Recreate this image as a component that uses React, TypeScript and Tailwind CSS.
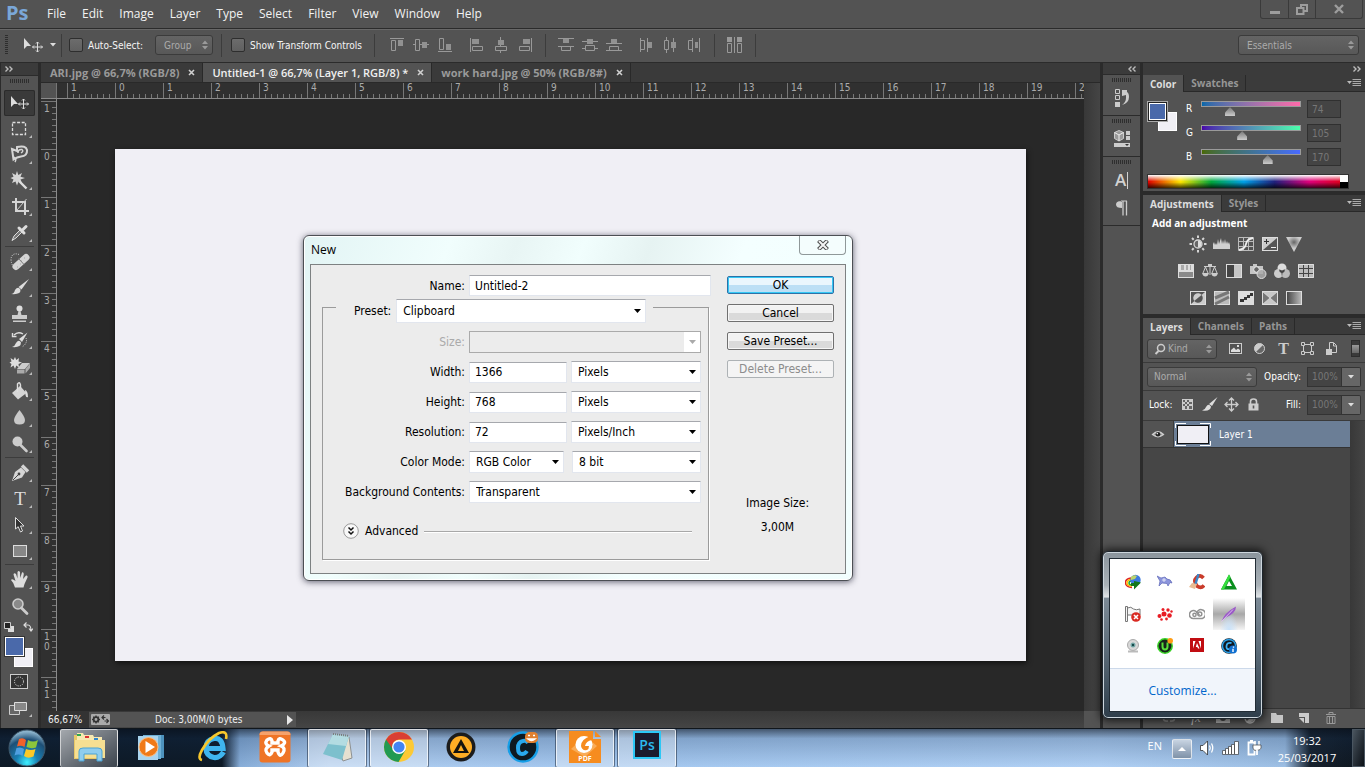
import { useId, useState } from "react";
import type { ReactNode } from "react";
import clsx from "clsx";

const menus = ["File", "Edit", "Image", "Layer", "Type", "Select", "Filter", "View", "Window", "Help"];

/* ---------- small shared pieces ---------- */

function Grip({ className }: { className?: string }) {
  return (
    <div
      className={clsx(
        "bg-[repeating-linear-gradient(90deg,#2e2e2e_0_1px,transparent_1px_2px)]",
        className
      )}
    />
  );
}

function UpDown() {
  return (
    <svg viewBox="0 0 6 10" className="h-[10px] w-[6px]" aria-hidden="true">
      <path d="M0 4 3 0.5 6 4Z M0 6 3 9.5 6 6Z" fill="#9a9a9a" />
    </svg>
  );
}

function DarkSelect({
  label,
  value,
  className,
  padding = "pl-2",
  icon,
}: {
  label: string;
  value: string;
  className?: string;
  padding?: string;
  icon?: ReactNode;
}) {
  return (
    <div
      className={clsx(
        "relative h-5 rounded-[3px] border border-[#3b3b3b] bg-linear-to-b from-[#646464] to-[#585858]",
        className
      )}
    >
      {icon && <div className="absolute left-1.5 top-[3px]">{icon}</div>}
      <select
        aria-label={label}
        defaultValue={value}
        className={clsx("block h-full w-full appearance-none bg-transparent text-[10px] text-[#ababab] outline-none", padding)}
      >
        <option>{value}</option>
      </select>
      <div className="pointer-events-none absolute inset-y-0 right-1 flex items-center">
        <UpDown />
      </div>
    </div>
  );
}

function PanelTabs({ tabs }: { tabs: string[] }) {
  return (
    <div className="flex h-[17px] shrink-0 items-stretch bg-[#3b3b3b] font-['Open_Sans',sans-serif] text-[10px] font-bold">
      {tabs.map((tab, i) => (
        <button
          key={tab}
          className={clsx(
            "border-r border-[#292929] px-[7px] leading-[16px]",
            i === 0 ? "bg-[#535353] text-[#dedede]" : "border-b text-[#969696]"
          )}
        >
          {tab}
        </button>
      ))}
      <div className="flex flex-1 items-center justify-end border-b border-[#292929] pr-1">
        <button aria-label="Panel menu">
          <svg viewBox="0 0 14 10" className="h-[10px] w-[14px]" aria-hidden="true">
            <path d="M0 3H5L2.5 6Z" fill="#bbb" />
            <path d="M5.5 1.5H14M5.5 3.5H14M5.5 5.5H14M5.5 7.5H14" stroke="#aaa" />
          </svg>
        </button>
      </div>
    </div>
  );
}

function Chevrons({ left }: { left?: boolean }) {
  return (
    <svg viewBox="0 0 8 6" className={clsx("h-[6px] w-[8px]", left && "rotate-180")} aria-hidden="true">
      <path d="M0.5 0.5 3 3 0.5 5.5M4.5 0.5 7 3 4.5 5.5" fill="none" stroke="#bcbcbc" strokeWidth="1.4" />
    </svg>
  );
}

/* ---------- menu + options bar ---------- */

function MenuBar() {
  return (
    <header className="flex h-[29px] shrink-0 border-b border-[#2b2b2b] bg-[#535353]">
      <div className="w-[47px] pl-[6px] font-['Open_Sans',sans-serif] text-[20px] font-bold leading-[25px] text-[#7aa7d8]">Ps</div>
      <nav className="flex items-center gap-4 font-['Open_Sans',sans-serif] text-[12px] text-[#f2f2f2]">
        {menus.map((m) => (
          <button key={m}>{m}</button>
        ))}
      </nav>
      <div className="ml-auto mr-[2px] flex h-[19px] rounded-b-[3px] border border-t-0 border-[#3a3a3a]">
        <button aria-label="Minimize" className="flex w-[28px] items-center justify-center border-r border-[#3a3a3a]">
          <svg viewBox="0 0 12 12" className="size-3" aria-hidden="true">
            <path d="M1 8H11V11H1Z" fill="#9d9d9d" />
          </svg>
        </button>
        <button aria-label="Restore" className="flex w-[27px] items-center justify-center border-r border-[#3a3a3a]">
          <svg viewBox="0 0 12 12" className="size-3" fill="none" stroke="#9d9d9d" strokeWidth="2" aria-hidden="true">
            <path d="M5 4V2H11V8H8M1 5H7.5V11H1Z" />
          </svg>
        </button>
        <button aria-label="Close" className="flex w-[46px] items-center justify-center">
          <svg viewBox="0 0 12 12" className="size-3" stroke="#9d9d9d" strokeWidth="2.4" aria-hidden="true">
            <path d="M2 2 10 10M10 2 2 10" />
          </svg>
        </button>
      </div>
    </header>
  );
}

// solid blocks, outlined blocks and guide lines of each align / distribute button
const alignIcons: { name: string; solid: string; outline: string; line: string; space: string }[] = [
  { name: "Align top edges", solid: "M9 3H14V9H9Z", outline: "M2.5 3.5H6.5V13.5H2.5Z", line: "M1 1.5H15", space: "" },
  { name: "Align vertical centers", solid: "M9 5H14V11H9Z", outline: "M2.5 2.5H6.5V13.5H2.5Z", line: "M0 7.5H2M7 7.5H16", space: "ml-2" },
  { name: "Align bottom edges", solid: "M9 7H14V13H9Z", outline: "M2.5 1.5H6.5V12.5H2.5Z", line: "M1 14.5H15", space: "ml-2" },
  { name: "Align left edges", solid: "M3 2H10V7H3Z", outline: "M3.5 9.5H13.5V13.5H3.5Z", line: "M1.5 1V15", space: "ml-4" },
  { name: "Align horizontal centers", solid: "M5 3H11V8H5Z", outline: "M2.5 9.5H13.5V13.5H2.5Z", line: "M7.5 0V3M7.5 8V10M7.5 14V16", space: "ml-2" },
  { name: "Align right edges", solid: "M6 2H13V7H6Z", outline: "M2.5 9.5H12.5V13.5H2.5Z", line: "M14.5 1V15", space: "ml-2" },
];

const distributeIcons = [
  { name: "Distribute top edges", solid: "M5 2H11V6H5Z", outline: "M3.5 9.5H12.5V13.5H3.5Z", line: "M0 1.5H16M0 9.5H16", space: "" },
  { name: "Distribute vertical centers", solid: "M5 2H11V7H5Z", outline: "M3.5 8.5H12.5V13.5H3.5Z", line: "M0 4.5H16M0 11.5H3M13 11.5H16", space: "ml-2" },
  { name: "Distribute bottom edges", solid: "M5 2H11V6H5Z", outline: "M3.5 9.5H12.5V13.5H3.5Z", line: "M0 6.5H16M0 13.5H16", space: "ml-2" },
  { name: "Distribute left edges", solid: "M10 5H14V11H10Z", outline: "M2.5 3.5H6.5V12.5H2.5Z", line: "M2.5 1V15M9.5 1V15", space: "ml-4" },
  { name: "Distribute horizontal centers", solid: "M9 5H14V11H9Z", outline: "M2.5 3.5H6.5V12.5H2.5Z", line: "M4.5 0V3M4.5 13V16M11.5 1V15", space: "ml-2" },
  { name: "Distribute right edges", solid: "M9 5H12V11H9Z", outline: "M2.5 3.5H6.5V12.5H2.5Z", line: "M6.5 1V15M13.5 1V15", space: "ml-2" },
];

function AlignButton({ icon }: { icon: (typeof alignIcons)[number] }) {
  return (
    <button aria-label={icon.name} className={icon.space}>
      <svg viewBox="0 0 16 16" className="size-4" aria-hidden="true">
        <path d={icon.line} stroke="#999" />
        <path d={icon.outline} fill="none" stroke="#999" />
        <path d={icon.solid} fill="#919191" />
      </svg>
    </button>
  );
}

function Divider({ className }: { className?: string }) {
  return <div className={clsx("h-[23px] w-px bg-[#3c3c3c]", className)} />;
}

function DarkCheck({ label, className }: { label: string; className?: string }) {
  return (
    <label className={clsx("flex items-center gap-[5px] text-[10px] text-[#f5f5f5]", className)}>
      <input
        type="checkbox"
        className="size-[14px] appearance-none rounded-[2px] border border-[#2e2e2e] bg-linear-to-b from-[#6c6c6c] to-[#606060]"
      />
      {label}
    </label>
  );
}

function OptionsBar() {
  return (
    <div className="flex h-[34px] shrink-0 items-center border-b border-t border-b-[#2b2b2b] border-t-[#686868] bg-[#535353] pb-0.5 pl-[5px]">
      <div className="h-5 w-[3px] bg-[repeating-linear-gradient(#2e2e2e_0_1px,transparent_1px_2px)]" />
      <button aria-label="Move tool" className="ml-4 flex items-center gap-2">
        <svg viewBox="0 0 18 16" className="h-4 w-[18px] overflow-visible" aria-hidden="true">
          <path d="M0 1V12L3 9H7Z" fill="#ddd" />
          <path d="M13.5 5V15M8.5 10H18.5" stroke="#ddd" />
          <path d="M12 6.5 13.5 5 15 6.5M12 13.5 13.5 15 15 13.5M10 8.5 8.5 10 10 11.5M17 8.5 18.5 10 17 11.5" fill="none" stroke="#ddd" />
        </svg>
        <svg viewBox="0 0 6 4" className="h-1 w-1.5" aria-hidden="true">
          <path d="M0 0H6L3 3.5Z" fill="#ddd" />
        </svg>
      </button>
      <Divider className="ml-[5px]" />
      <DarkCheck label="Auto-Select:" className="ml-[7px]" />
      <DarkSelect label="Auto-select target" value="Group" className="ml-3 w-[58px]" />
      <Divider className="ml-2" />
      <DarkCheck label="Show Transform Controls" className="ml-[9px]" />
      <Divider className="ml-3 mr-3.5" />
      {alignIcons.map((i) => (
        <AlignButton key={i.name} icon={i} />
      ))}
      <Divider className="mx-3" />
      {distributeIcons.map((i) => (
        <AlignButton key={i.name} icon={i} />
      ))}
      <Divider className="mx-3" />
      <button aria-label="Auto-align layers">
        <svg viewBox="0 0 16 16" className="size-4" aria-hidden="true">
          <path d="M0 0H5V5H0ZM10 0H15V5H10Z" fill="#999" />
          <path d="M0.5 6.5H4.5V15.5H0.5ZM10.5 6.5H14.5V15.5H10.5ZM7.5 0V16" fill="none" stroke="#999" />
        </svg>
      </button>
      <Divider className="ml-3" />
      <DarkSelect label="Workspace" value="Essentials" className="ml-auto mr-1.5 w-[121px]" />
    </div>
  );
}

/* ---------- toolbox ---------- */

type Tool = { name: string; art: ReactNode; flyout?: boolean };

const toolGroups: Tool[][] = [
  [
    {
      name: "Move",
      flyout: false,
      art: (
        <>
          <path d="M6 6V17L9 14H13Z" fill="#ddd" />
          <path d="M18.5 9V19M13.5 14H23.5M17 10.5 18.5 9 20 10.5M17 17.5 18.5 19 20 17.5M15 12.5 13.5 14 15 15.5M22 12.5 23.5 14 22 15.5" fill="none" stroke="#ddd" />
        </>
      ),
    },
    { name: "Marquee", art: <rect x="7.5" y="6.5" width="13" height="12" fill="none" stroke="#ddd" strokeDasharray="3 1.6" strokeWidth="1.3" /> },
    {
      name: "Lasso",
      art: (
        <>
          <path d="M7 7 12 9V5Q21 3 22 8Q22.5 14 16 14.500Q12 15 8.500 17.500L7 7Z" fill="none" stroke="#d5d5d5" strokeWidth="2" />
          <path d="M13 11Q13 7 17 7.500Q19 9 16 11M9 15Q12 17 10 20" fill="none" stroke="#d5d5d5" strokeWidth="1.5" />
        </>
      ),
    },
    {
      name: "Magic wand",
      art: (
        <>
          <path d="M12 3 13.3 7 17 5 15.500 8.700 20 10 15.500 11.500 17 15 13.500 13.500 12 17.500 10.500 13.500 7 15 8.500 11.500 5.500 10 8.500 8.700 7 5 10.700 7Z" fill="#d5d5d5" />
          <path d="M14 13 21.5 20.5" stroke="#ddd" strokeWidth="2.4" />
        </>
      ),
    },
    {
      name: "Crop",
      art: (
        <>
          <path d="M11 4V17H24M7 8H20V21" fill="none" stroke="#d5d5d5" strokeWidth="2" />
          <path d="M12 16 21.5 5" stroke="#ccc" />
        </>
      ),
    },
    {
      name: "Eyedropper",
      art: (
        <>
          <path d="M7 20.5 9 16 15 10 17 12 11 18Z" fill="#777" stroke="#ddd" />
          <path d="M14 8 19 13M17 10.5 21 6.5" stroke="#ddd" strokeWidth="3" strokeLinecap="round" />
        </>
      ),
    },
  ],
  [
    {
      name: "Healing brush",
      art: (
        <>
          <path d="M11 17.5 21 8.500" stroke="#d5d5d5" strokeWidth="7" strokeLinecap="round" />
          <path d="M13.5 9.5 19 15.5M15 15H15.5M16.500 12H17M12 18H12.5M19.500 9H20" stroke="#777" />
          <path d="M14 5.5Q7 3 6 10Q6 14 8 17" fill="none" stroke="#ddd" strokeDasharray="1 1.3" />
        </>
      ),
    },
    {
      name: "Brush",
      art: (
        <>
          <path d="M13.500 12 24 4 16.5 14.5Z" fill="#ddd" />
          <path d="M6 19Q9 19 10 15Q13 11 15.5 14.5Q16 20 6 19Z" fill="#ddd" />
        </>
      ),
    },
    {
      name: "Clone stamp",
      art: (
        <>
          <circle cx="14.5" cy="7.5" r="3" fill="#ddd" />
          <path d="M13.5 10H15.5L16.5 14H22V18H7V14H12.5ZM8 19.5H21V21H8Z" fill="#ccc" />
        </>
      ),
    },
    {
      name: "History brush",
      art: (
        <>
          <path d="M14 12 22.5 5.5 17 15Z" fill="#ddd" />
          <path d="M7 20Q10 19 11 16Q14 12 16 15.5Q16 21 7 20Z" fill="#ddd" />
          <path d="M9 8Q13 4 18 7M7.5 6V9.5H11.5" fill="none" stroke="#ddd" strokeWidth="1.4" />
          <path d="M21 11Q23 16 17 20" fill="none" stroke="#ddd" strokeDasharray="1 1.2" />
        </>
      ),
    },
    {
      name: "Background eraser",
      art: (
        <>
          <path d="M10 4 11.3 7 14 5 13.5 8.5 17 9.5 13.5 11 14 14.5 11.3 12.5 10 16 8.5 12.5 5.5 14.5 6.5 11 4.5 9.5 6.5 8.5 5.5 5 8.5 7Z" fill="#ddd" />
          <path d="M12 16 17 10H25L20 16Z" fill="#ccc" />
          <path d="M12 16.500H19.500V20.500H12ZM20.5 16 25 10.500V15L20.5 20.500Z" fill="#aaa" />
        </>
      ),
    },
    {
      name: "Paint bucket",
      art: (
        <>
          <path d="M7 14 15 7 21.5 14 13 20.5Z" fill="#d5d5d5" />
          <path d="M12.5 13V5Q14.5 2 15.5 6V9" fill="none" stroke="#ddd" strokeWidth="1.4" />
          <path d="M20 11Q23 12 23 18Q21 19 20.5 16Z" fill="#ddd" />
        </>
      ),
    },
    { name: "Blur", art: <path d="M14.5 5Q20 12 20 15Q20 19.5 14.5 19.5T9 15Q9 12 14.5 5Z" fill="#c8c8c8" /> },
    {
      name: "Dodge",
      art: (
        <>
          <circle cx="12.5" cy="10.5" r="5" fill="#ccc" />
          <path d="M15.5 14 21.5 20" stroke="#ccc" strokeWidth="2.6" strokeLinecap="round" />
        </>
      ),
    },
  ],
  [
    {
      name: "Pen",
      art: (
        <>
          <path d="M7 21 10 12 16 7.500 20.500 12 17 17.500Z" fill="#d5d5d5" />
          <path d="M17 5.5 23 11.5" stroke="#d5d5d5" strokeWidth="3.4" />
          <path d="M8 20 13.5 14.5" stroke="#444" />
          <circle cx="14" cy="14" r="1.4" fill="#444" />
        </>
      ),
    },
    {
      name: "Type",
      art: (
        <text x="15" y="19" textAnchor="middle" fill="#ddd" fontSize="19" fontFamily="'Liberation Serif', serif">
          T
        </text>
      ),
    },
    { name: "Path selection", art: <path d="M10.5 5.5V17L13.2 14.7 15.5 20 17.5 19 15.5 14H19Z" fill="#333" stroke="#ddd" /> },
    { name: "Rectangle", art: <rect x="8.5" y="7.5" width="13" height="11" fill="#878787" stroke="#ddd" /> },
  ],
  [
    {
      name: "Hand",
      art: (
        <path
          d="M10 20.5Q9 16 6 13Q7 11 10.5 14L8.500 7.5Q9 5.5 11 7L12.500 11.5 12.5 5Q13.5 3 15 5L15.2 11 17 5.500Q18.5 4.500 18.8 7L18 12 21 8.500Q23 8 22.5 10.500L19.5 17 18.5 20.5Z"
          fill="#ddd"
        />
      ),
    },
    {
      name: "Zoom",
      flyout: false,
      art: (
        <>
          <circle cx="13" cy="11" r="5" fill="#8a8a8a" stroke="#ccc" strokeWidth="1.6" />
          <path d="M16.5 15 22 20.5" stroke="#ccc" strokeWidth="2.8" strokeLinecap="round" />
        </>
      ),
    },
  ],
];

function Toolbox() {
  const [active, setActive] = useState("Move");
  return (
    <aside className="ml-px flex w-[37px] shrink-0 flex-col bg-[#535353]">
      <div className="flex h-[12px] shrink-0 items-center bg-[#3b3b3b] pl-1">
        <Chevrons />
      </div>
      <div className="flex h-[15px] shrink-0 items-start justify-center border-t border-[#2b2b2b] pt-[3px]">
        <Grip className="h-1 w-5" />
      </div>
      {toolGroups.map((group, g) => (
        <div key={g} className={clsx("flex flex-col", g > 0 && "mx-1 border-t border-[#3c3c3c] pt-0.5")}>
          {group.map((tool) => (
            <button
              key={tool.name}
              aria-label={tool.name}
              aria-pressed={tool.name === active}
              onClick={() => setActive(tool.name)}
              className={clsx(
                "flex h-[26px] justify-center rounded-[2px]",
                g === 0 && "mx-[3px]",
                tool.name === active && "bg-[#3a3a3a] shadow-[inset_0_0_0_1px_#2b2b2b]"
              )}
            >
              <svg viewBox="0 0 30 26" className="h-[26px] w-[30px] shrink-0" aria-hidden="true">
                {tool.art}
                {tool.flyout !== false && <path d="M27 19V22H24Z" fill="#bbb" />}
              </svg>
            </button>
          ))}
        </div>
      ))}
      <div className="flex h-[16px] items-center justify-between pl-[3px] pr-[5px]">
        <button aria-label="Default colors">
          <svg viewBox="0 0 10 10" className="size-[10px]" aria-hidden="true">
            <path d="M4 4H10V10H4Z" fill="#ddd" />
            <path d="M0.5 0.5H6.5V6.5H0.5Z" fill="#222" stroke="#ccc" />
          </svg>
        </button>
        <button aria-label="Swap colors">
          <svg viewBox="0 0 10 10" className="size-[10px]" fill="none" stroke="#ddd" strokeWidth="1.2" aria-hidden="true">
            <path d="M3.5 0.5 1 3 3.5 5.5M1 3H5Q8 3 8 9M6 6.5 8 9 10 6.5" />
          </svg>
        </button>
      </div>
      <div className="relative ml-1 mr-[5px] mt-0.5 h-[30px]">
        <button aria-label="Background color" className="absolute right-0 bottom-0 size-[19px] border border-white bg-[#f0eff5]" />
        <button aria-label="Foreground color" className="absolute left-0 top-0 size-[19px] border border-white bg-[#4a69aa] outline outline-1 outline-[#333]" />
      </div>
      <button aria-label="Quick mask" className="mr-0.5 mt-[7px] flex justify-center">
        <svg viewBox="0 0 18 15" className="h-[15px] w-[18px]" aria-hidden="true">
          <rect x="0.5" y="0.5" width="17" height="14" fill="#333" stroke="#ccc" />
          <circle cx="9" cy="7.5" r="4.5" fill="none" stroke="#ddd" strokeDasharray="1.2 1.2" />
        </svg>
      </button>
      <button aria-label="Screen mode" className="mt-3 flex justify-center">
        <svg viewBox="0 0 26 17" className="h-[17px] w-[26px]" aria-hidden="true">
          <path d="M2.5 4.5H12.5V13.5H2.5Z" fill="#666" stroke="#ccc" />
          <path d="M7.5 1.5H19.5V9.5H7.5Z" fill="#888" stroke="#ddd" />
          <path d="M25 13V16H22Z" fill="#bbb" />
        </svg>
      </button>
    </aside>
  );
}

/* ---------- document area ---------- */

const docTabs = ["ARI.jpg @ 66,7% (RGB/8)", "Untitled-1 @ 66,7% (Layer 1, RGB/8) *", "work hard.jpg @ 50% (RGB/8#)"];
const hMarks = ["1", ...Array.from({ length: 21 }, (_, i) => String(i))];
const vMarks = ["1", ...Array.from({ length: 12 }, (_, i) => String(i))];

function HorizontalRuler() {
  return (
    <div className="flex h-[16px] shrink-0 border-b border-[#8a8a8a] bg-[#303030]">
      <div className="w-[16px] shrink-0 border-r border-[#777] bg-[#535353]" />
      <div className="flex flex-1 overflow-hidden pl-[10px] text-[10px] leading-[10px] text-[#ababab]">
        {hMarks.map((m, i) => (
          <div key={i} className="flex w-12 shrink-0 flex-col justify-between border-l border-[#777]">
            <span className="pl-[3px]">{m}</span>
            <div className="h-1 bg-[repeating-linear-gradient(90deg,transparent_0_5px,#777_5px_6px)]" />
          </div>
        ))}
      </div>
    </div>
  );
}

function VerticalRuler() {
  return (
    <div className="flex w-[16px] shrink-0 flex-col overflow-hidden border-r border-[#8a8a8a] bg-[#303030] pt-0.5 text-[10px] leading-[10px] text-[#ababab]">
      {vMarks.map((m, i) => (
        <div key={i} className="flex h-12 shrink-0 justify-between border-t border-[#777]">
          <span className="flex flex-col pl-[3px] pt-0.5">
            {m.split("").map((c, n) => (
              <span key={n}>{c}</span>
            ))}
          </span>
          <div className="w-1 bg-[repeating-linear-gradient(transparent_0_5px,#777_5px_6px)]" />
        </div>
      ))}
    </div>
  );
}

function DocumentArea() {
  return (
    <main className="ml-[3px] flex min-w-0 flex-1 flex-col bg-[#3f3f3f]">
      <div className="flex h-5 shrink-0 border-b border-[#292929] bg-[#3a3a3a] font-['Open_Sans',sans-serif] text-[11px]">
        {docTabs.map((t, i) => (
          <div
            key={t}
            className={clsx(
              "flex items-center border-r border-[#292929] pl-[9px] pr-[7px]",
              i === 1 ? "bg-[#535353] font-semibold text-[#f0f0f0]" : "font-bold text-[#999]"
            )}
          >
            <button className="whitespace-nowrap leading-[18px]">{t}</button>
            <button aria-label={"Close " + t} className="ml-[9px]">
              <svg viewBox="0 0 7 7" className="size-[7px]" stroke="#d0d0d0" strokeWidth="1.6" aria-hidden="true">
                <path d="M1 1 6 6M6 1 1 6" />
              </svg>
            </button>
          </div>
        ))}
      </div>
      <div className="flex min-h-0 flex-1">
        <div className="flex min-w-0 flex-1 flex-col">
          <HorizontalRuler />
          <div className="flex min-h-0 flex-1">
            <VerticalRuler />
            <div className="flex-1 overflow-hidden bg-[#282828] pl-[58px] pt-[50px]">
              <div className="h-[512px] w-[911px] bg-[#f0eff5] shadow-[1px_2px_5px_#111]" />
            </div>
          </div>
        </div>
        <div className="w-4 shrink-0 bg-linear-to-r from-[#383838] to-[#454545]" />
      </div>
      <div className="flex h-[17px] shrink-0 items-center bg-linear-to-b from-[#383838] to-[#454545] text-[10px] text-[#f0f0f0]">
        <span className="flex h-full w-[48px] items-center bg-[#333] pl-[7px]">66,67%</span>
        <div className="flex h-[15px] w-[207px] items-center bg-[#535353] pl-[2px] pr-[3px]">
          <svg viewBox="0 0 19 11" className="h-[11px] w-[19px]" aria-hidden="true">
            <rect width="19" height="11" rx="1" fill="#aaa" />
            <circle cx="5" cy="5.5" r="2.3" fill="none" stroke="#333" strokeWidth="1.7" />
            <path d="M5 1.5V3M5 8V9.500M1 5.500H2.500M7.500 5.500H9M2.2 2.700 3.3 3.800M6.700 7.200 7.800 8.300M7.8 2.700 6.700 3.800M3.300 7.200 2.2 8.300" stroke="#333" strokeWidth="1.3" />
            <path d="M13 1.5 11 3.5 13 5.5M11 3.5H14.5M15.500 5 17.5 7 15.5 9M17.5 7H13.5" fill="none" stroke="#333" strokeWidth="1.2" />
          </svg>
          <span className="ml-[45px]">Doc: 3,00M/0 bytes</span>
          <button aria-label="Status options" className="ml-auto">
            <svg viewBox="0 0 6 10" className="h-[10px] w-[6px]" aria-hidden="true">
              <path d="M0 0 6 5 0 10Z" fill="#e8e8e8" />
            </svg>
          </button>
        </div>
        <div className="ml-auto h-full w-4 bg-[#535353]" />
      </div>
    </main>
  );
}

/* ---------- docks on the right ---------- */

function IconDock() {
  return (
    <div className="flex w-[38px] shrink-0 flex-col border-l border-[#2b2b2b] bg-[#535353]">
      <div className="flex h-[12px] shrink-0 items-center justify-end border-b border-[#2b2b2b] bg-[#3b3b3b] pr-1">
        <Chevrons left />
      </div>
      <div className="flex h-[41px] flex-col items-center border-b border-[#2b2b2b] pt-[3px]">
        <Grip className="h-1 w-5" />
        <button aria-label="History" className="mt-1.5">
          <svg viewBox="0 0 16 20" className="h-5 w-4" aria-hidden="true">
            <path d="M1.5 1.5H5.5V5.5H1.5ZM1.5 7.5H5.5V11.5H1.5Z" fill="none" stroke="#ccc" />
            <path d="M1 14H6V19H1Z" fill="#ccc" />
            <path d="M8 2H13V4Q15 5 15 9Q15 15 8 17Q12 14 12 10V7L8 8Z" fill="#ccc" />
          </svg>
        </button>
      </div>
      <div className="flex h-[41px] flex-col items-center border-b border-[#2b2b2b] pt-[3px]">
        <Grip className="h-1 w-5" />
        <button aria-label="Properties" className="mt-1.5">
          <svg viewBox="0 0 16 18" className="h-[18px] w-4" aria-hidden="true">
            <path d="M5 1.5 9.5 3.5V9.5L5 12 0.5 9.5V3.5Z" fill="#999" stroke="#ccc" />
            <path d="M0.5 3.5 5 6 9.5 3.5M5 6V12" fill="none" stroke="#eee" />
            <path d="M12 2H16V6H12ZM12 7H16V11H12ZM0 14H16V18H0Z" fill="#ccc" />
            <path d="M11 15H15L13 17Z" fill="#333" />
          </svg>
        </button>
      </div>
      <div className="flex h-[69px] flex-col items-center border-b border-[#2b2b2b] pt-[3px]">
        <Grip className="h-1 w-5" />
        <button
          aria-label="Character"
          className="mt-1.5 flex h-5 items-center gap-px font-['Open_Sans',sans-serif] text-[17px] font-semibold text-[#d2d2d2]"
        >
          A<span className="h-[17px] w-px bg-[#d2d2d2]" />
        </button>
        <button aria-label="Paragraph" className="mt-2.5">
          <svg viewBox="0 0 14 16" className="h-4 w-3.5" aria-hidden="true">
            <path d="M6 1Q1 1 1 4.5T7 8V1ZM6 0.5H12V1.5H6Z" fill="#ccc" />
            <path d="M8 1V15.5M11.5 1V15.5" stroke="#ccc" strokeWidth="1.3" />
          </svg>
        </button>
      </div>
    </div>
  );
}

const channels = [
  { id: "R", value: 74, bar: "bg-linear-to-r from-[#0069aa] to-[#ff69aa]" },
  { id: "G", value: 105, bar: "bg-linear-to-r from-[#4a00aa] to-[#4affaa]" },
  { id: "B", value: 170, bar: "bg-linear-to-r from-[#4a6900] to-[#4a69ff]" },
];

function ColorPanel() {
  return (
    <section className="flex shrink-0 flex-col bg-[#535353]">
      <PanelTabs tabs={["Color", "Swatches"]} />
      <div className="flex h-[99px] flex-col px-1 pt-2">
        <div className="flex h-[74px]">
          <div className="relative mt-px h-[30px] w-[30px] shrink-0">
            <button aria-label="Background" className="absolute right-0 bottom-0 size-[19px] border border-white bg-[#f0eff5]" />
            <button
              aria-label="Foreground"
              className="absolute left-px top-px size-[19px] border border-[#222] bg-[#4a69aa] shadow-[inset_0_0_0_1px_#fff] outline outline-1 outline-[#aaa]"
            />
          </div>
          <div className="ml-[9px] flex flex-1 flex-col">
            {channels.map((c) => (
              <div key={c.id} className="flex h-6 text-[10px]">
                <label htmlFor={"ch-" + c.id} className="w-[15px] pt-px text-white">
                  {c.id}
                </label>
                <div className="flex w-[100px] flex-col pt-px">
                  <div className={clsx("h-1.5 border border-[#9a9a9a]", c.bar)} />
                  <input
                    id={"ch-" + c.id}
                    type="range"
                    min={0}
                    max={255}
                    defaultValue={c.value}
                    className="-mx-[5px] h-[9px] w-[110px] appearance-none bg-transparent [&::-webkit-slider-thumb]:h-[9px] [&::-webkit-slider-thumb]:w-[10px] [&::-webkit-slider-thumb]:appearance-none [&::-webkit-slider-thumb]:bg-linear-to-b [&::-webkit-slider-thumb]:from-[#777] [&::-webkit-slider-thumb]:to-[#ccc] [&::-webkit-slider-thumb]:[clip-path:polygon(50%_0,100%_60%,100%_100%,0_100%,0_60%)]"
                  />
                </div>
                <input
                  aria-label={c.id + " value"}
                  defaultValue={c.value}
                  className="ml-1.5 h-[18px] w-[34px] border border-[#303030] bg-[#444] pl-1 text-[10px] text-[#777] outline-none"
                />
              </div>
            ))}
          </div>
        </div>
        <div className="flex h-[15px] w-[202px] border border-[#333]">
          <div className="flex-1 bg-[linear-gradient(#fff_0%,transparent_50%,transparent_55%,#000_115%),linear-gradient(90deg,#e00000,#ffe800_17%,#00a83c_33%,#00a0e8_50%,#20207c_66%,#e0007c_84%,#e00020)]" />
          <div className="flex w-2 flex-col">
            <div className="flex-1 bg-white" />
            <div className="flex-1 bg-black" />
          </div>
        </div>
      </div>
    </section>
  );
}

const adjustments: { name: string; art: ReactNode }[][] = [
  [
    {
      name: "Brightness/Contrast",
      art: (
        <>
          <circle cx="8" cy="8" r="4" fill="#666" stroke="#d5d5d5" strokeWidth="1.3" />
          <path d="M8 4.5A3.5 3.5 0 0 1 8 11.5Z" fill="#ddd" />
          <path d="M8 -0.5V2M8 14V16.500M-0.5 8H2M14 8H16.500M2 2 3.7 3.7M12.300 12.300 14 14M14 2 12.300 3.7M3.7 12.300 2 14" stroke="#d5d5d5" strokeWidth="2" />
        </>
      ),
    },
    { name: "Levels", art: <path d="M-1 13V8L0 6 1 9 2 7 3 9 4 3 5 8 6 5 7 2 8 8 9 4 10 8 11 3 12 8 13 5 14 8 15 6 16 9V13Z" fill="#d0d0d0" /> },
    {
      name: "Curves",
      art: (
        <>
          <path d="M0.5 1.5H15.5V14.5H0.5ZM0 5.5H16M0 10.5H16M5.5 2V14M10.5 2V14" fill="none" stroke="#bbb" />
          <path d="M1 14Q7 13 8 8T15 2" fill="none" stroke="#eee" strokeWidth="1.8" />
        </>
      ),
    },
    {
      name: "Exposure",
      art: (
        <>
          <rect x="0.5" y="1.5" width="15" height="13" fill="#555" stroke="#ddd" />
          <path d="M1 14V2H15Z" fill="#ccc" />
          <path d="M2 5.5H7M4.5 3V8" stroke="#333" />
          <path d="M9 11.5H14" stroke="#eee" />
        </>
      ),
    },
    {
      name: "Vibrance",
      art: (
        <>
          <defs>
            <radialGradient id="vib" cx="50%" cy="35%" r="40%">
              <stop stopColor="#666" />
              <stop offset="1" stopColor="#ccc" />
            </radialGradient>
          </defs>
          <path d="M0 1H16L8 16Z" fill="url(#vib)" />
        </>
      ),
    },
  ],
  [
    {
      name: "Hue/Saturation",
      art: (
        <>
          <path d="M0 1H16V15H0Z" fill="#ddd" />
          <path d="M3 2H6V7H3ZM8 2H10V7H8ZM12 2H13V7H12Z" fill="#aaa" />
          <path d="M1 9H15V14H1Z" fill="#8a8a8a" />
        </>
      ),
    },
    {
      name: "Color Balance",
      art: (
        <>
          <path d="M2 3.5H14M8 1V12M3.5 4 1 10M3.5 4 6 10M12.5 4 10 10M12.5 4 15 10" fill="none" stroke="#ccc" />
          <path d="M0 10H7Q6 13.5 3.5 13.5T0 10ZM9 10H16Q15 13.5 12.5 13.5T9 10ZM6 1H10V4H6Z" fill="#ccc" />
        </>
      ),
    },
    {
      name: "Black & White",
      art: (
        <>
          <rect x="0.5" y="1.5" width="15" height="13" fill="#444" stroke="#ddd" />
          <path d="M8 2H15V14H8Z" fill="#c5c5c5" />
        </>
      ),
    },
    {
      name: "Photo Filter",
      art: (
        <>
          <path d="M0 3H3V1H7V3H13V11H0Z" fill="#c5c5c5" />
          <circle cx="6.5" cy="6.5" r="2.8" fill="#666" stroke="#eee" />
          <circle cx="11.5" cy="11" r="4.5" fill="#aaa" fillOpacity="0.85" stroke="#ddd" />
        </>
      ),
    },
    {
      name: "Channel Mixer",
      art: (
        <>
          <circle cx="8" cy="5" r="4.5" fill="#ddd" />
          <circle cx="4.5" cy="10.5" r="4.5" fill="#ccc" />
          <circle cx="11.5" cy="10.5" r="4.5" fill="#bbb" />
          <path d="M5 6.5 8 7.5 11 6.5Q11 9 8.5 10L8 13.5 7.5 10Q5 9 5 6.5Z" fill="#444" />
        </>
      ),
    },
    {
      name: "Color Lookup",
      art: (
        <>
          <path d="M0 1H16V15H0Z" fill="#bbb" />
          <path d="M5.5 1V15M10.5 1V15M0 5.5H16M0 10.5H16" stroke="#444" />
          <path d="M0.5 1.5H15.5V14.5H0.5Z" fill="none" stroke="#ddd" />
        </>
      ),
    },
  ],
  [
    {
      name: "Invert",
      art: (
        <>
          <rect x="0.5" y="1.5" width="15" height="13" fill="#555" stroke="#ddd" />
          <path d="M1 14 15 2V14Z" fill="#ccc" />
          <path d="M4.300 11A4.500 4.500 0 0 1 11.700 5Z" fill="#ccc" />
          <path d="M4.300 11A4.500 4.500 0 0 0 11.700 5Z" fill="#555" />
        </>
      ),
    },
    {
      name: "Posterize",
      art: (
        <>
          <rect x="0.5" y="1.5" width="15" height="13" fill="#bbb" stroke="#ddd" />
          <path d="M1 8 15 2M1 14 15 7" stroke="#777" strokeWidth="3" />
        </>
      ),
    },
    {
      name: "Threshold",
      art: (
        <>
          <rect x="0.5" y="1.5" width="15" height="13" fill="#ddd" stroke="#ddd" />
          <path d="M2 9H6V7H9V5H12V3H15V6H12V8H9V10H6V12H2Z" fill="#333" />
        </>
      ),
    },
    {
      name: "Selective Color",
      art: (
        <>
          <rect x="0.5" y="1.5" width="15" height="13" fill="#777" stroke="#ddd" />
          <path d="M1 2 8 8 15 2ZM1 14 8 8 15 14Z" fill="#c8c8c8" />
          <path d="M1 2 15 14M15 2 1 14" stroke="#ddd" strokeWidth="0.8" />
        </>
      ),
    },
    {
      name: "Gradient Map",
      art: (
        <>
          <defs>
            <linearGradient id="gmap">
              <stop stopColor="#444" />
              <stop offset="1" stopColor="#bbb" />
            </linearGradient>
          </defs>
          <rect x="0.5" y="1.5" width="15" height="13" fill="url(#gmap)" stroke="#ddd" />
        </>
      ),
    },
  ],
];

function AdjustmentsPanel() {
  return (
    <section className="mt-1 flex h-[119px] shrink-0 flex-col bg-[#535353]">
      <PanelTabs tabs={["Adjustments", "Styles"]} />
      <h2 className="pl-[9px] pt-1 font-['Open_Sans',sans-serif] text-[10px] font-bold leading-[15px] text-white">Add an adjustment</h2>
      <div className="flex w-[206px] flex-col gap-[11px] pt-[5px]">
        {adjustments.map((row, i) => (
          <div key={i} className="flex justify-center gap-2">
            {row.map((a) => (
              <button key={a.name} aria-label={a.name}>
                <svg viewBox="0 0 16 16" className="size-4 overflow-visible" aria-hidden="true">
                  {a.art}
                </svg>
              </button>
            ))}
          </div>
        ))}
      </div>
    </section>
  );
}

function PercentField({ label }: { label: string }) {
  const id = useId();
  return (
    <div className="flex items-center text-[10px]">
      <label htmlFor={id} className="text-white">
        {label}
      </label>
      <input id={id} defaultValue="100%" className="ml-1.5 h-5 w-[35px] border border-[#333] bg-[#444] pl-1 text-[#777] outline-none" />
      <button aria-label={label + " slider"} className="flex h-5 w-[19px] items-center justify-center rounded-r-[2px] border border-l-0 border-[#333] bg-[#666]">
        <svg viewBox="0 0 6 4" className="h-1 w-1.5" aria-hidden="true">
          <path d="M0 0H6L3 3.5Z" fill="#ddd" />
        </svg>
      </button>
    </div>
  );
}

const filterIcons: { name: string; art: ReactNode }[] = [
  {
    name: "Pixel layers",
    art: (
      <>
        <rect x="1.5" y="2.5" width="12" height="10" fill="none" stroke="#ccc" />
        <path d="M3 11V9L6 6.5 8 9 10 7.5 12 9V11ZM9 4H11V6H9Z" fill="#ddd" />
      </>
    ),
  },
  {
    name: "Adjustment layers",
    art: (
      <>
        <circle cx="7.5" cy="7.5" r="5" fill="#ccc" />
        <path d="M3.7 11.3 11.3 3.7A5 5 0 0 1 3.7 11.3Z" fill="#666" />
        <circle cx="7.5" cy="7.5" r="5" fill="none" stroke="#ccc" />
      </>
    ),
  },
  {
    name: "Type layers",
    art: (
      <text x="7.5" y="13" textAnchor="middle" fontSize="16" fontWeight="bold" fill="#ccc" fontFamily="'Liberation Serif', serif">
        T
      </text>
    ),
  },
  {
    name: "Shape layers",
    art: (
      <>
        <path d="M3.5 3.5H11.5V11.5H3.5Z" fill="none" stroke="#ccc" />
        <path d="M1.5 1.5H4.5V4.5H1.5ZM10.5 1.5H13.5V4.5H10.5ZM1.5 10.5H4.5V13.5H1.5ZM10.5 10.5H13.5V13.5H10.5Z" fill="#535353" stroke="#ccc" />
      </>
    ),
  },
  {
    name: "Smart objects",
    art: (
      <>
        <path d="M5.5 8V1.5H9.5L12.5 4.5V11.5H8M9.5 2V5H12" fill="none" stroke="#ccc" />
        <path d="M2 8H8V14H2Z" fill="#ccc" />
      </>
    ),
  },
];

function LayersPanel() {
  return (
    <section className="mt-1 flex min-h-0 flex-1 flex-col bg-[#535353]">
      <PanelTabs tabs={["Layers", "Channels", "Paths"]} />
      <div className="flex h-[28px] shrink-0 items-center border-b border-[#3a3a3a] pl-1">
        <DarkSelect
          label="Filter kind"
          value="Kind"
          className="w-[70px]"
          padding="pl-5"
          icon={
            <svg viewBox="0 0 12 12" className="size-3" fill="none" stroke="#ccc" aria-hidden="true">
              <circle cx="7" cy="5" r="3.5" strokeWidth="1.5" />
              <path d="M4.5 8 1.5 11" strokeWidth="2" />
            </svg>
          }
        />
        <div className="ml-[11px] flex gap-[9px]">
          {filterIcons.map((f) => (
            <button key={f.name} aria-label={f.name}>
              <svg viewBox="0 0 15 15" className="size-[15px]" aria-hidden="true">
                {f.art}
              </svg>
            </button>
          ))}
        </div>
        <button aria-label="Toggle filtering" className="ml-3 h-[17px] w-[9px] border border-[#2d2d2d] bg-[#3a3a3a]">
          <span className="block h-[8px] bg-linear-to-b from-[#999] to-[#666]" />
        </button>
      </div>
      <div className="flex h-[28px] shrink-0 items-center border-b border-[#3a3a3a] pl-1 pr-1">
        <DarkSelect label="Blend mode" value="Normal" className="w-[110px]" padding="pl-1.5" />
        <div className="ml-auto">
          <PercentField label="Opacity:" />
        </div>
      </div>
      <div className="flex h-[30px] shrink-0 items-center border-b border-[#3a3a3a] pb-0.5 pl-1.5 pr-1">
        <span className="w-[31px] text-[10px] text-white">Lock:</span>
        <div className="flex gap-[7px]">
          <button aria-label="Lock transparent pixels">
            <svg viewBox="0 0 15 15" className="size-[15px]" aria-hidden="true">
              <path d="M2 2H13V13H2Z" fill="#ccc" />
              <path d="M3 3H5V5H3ZM7 3H9V5H7ZM5 5H7V7H5ZM9 5H12V7H9ZM3 7H5V9H3ZM7 7H9V9H7ZM5 9H7V12H5ZM9 9H12V12H9Z" fill="#666" />
            </svg>
          </button>
          <button aria-label="Lock image pixels">
            <svg viewBox="0 0 15 15" className="size-[15px] overflow-visible" aria-hidden="true">
              <path d="M7 7 15.5 0 10 9ZM0 13.5Q3 13 4 10Q6.5 6 9 9.5Q9 14.5 0 13.5Z" fill="#ddd" />
            </svg>
          </button>
          <button aria-label="Lock position">
            <svg viewBox="0 0 15 15" className="size-[15px]" fill="none" stroke="#ccc" strokeWidth="1.3" aria-hidden="true">
              <path d="M7.5 1V14M1 7.5H14M5 3.5 7.5 1 10 3.5M5 11.5 7.5 14 10 11.5M3.5 5 1 7.5 3.5 10M11.5 5 14 7.5 11.5 10" />
            </svg>
          </button>
          <button aria-label="Lock all">
            <svg viewBox="0 0 15 15" className="size-[15px]" aria-hidden="true">
              <path d="M4.5 7V4.5Q4.5 2 7.5 2T10.5 4.5V7" fill="none" stroke="#ccc" strokeWidth="1.6" />
              <path d="M2.5 6.5H12.5V13.5H2.5Z" fill="#ccc" />
              <path d="M7.5 8.5V11.5" stroke="#555" strokeWidth="1.6" />
            </svg>
          </button>
        </div>
        <div className="ml-auto">
          <PercentField label="Fill:" />
        </div>
      </div>
      <div className="flex min-h-0 flex-1 bg-[#464646]">
        <div className="flex-1">
          <div className="flex h-[27px] items-center border-b border-[#333] bg-[#6b7e96]">
            <button aria-label="Toggle layer visibility" className="flex h-full w-[31px] items-center justify-center border-r border-[#3a3a3a] bg-[#535353]">
              <svg viewBox="0 0 14 10" className="h-[10px] w-3.5" aria-hidden="true">
                <path d="M1.500 5.5Q7 0 12.500 5.5Q7 10 1.500 5.5Z" fill="#999" stroke="#ccc" strokeWidth="1.3" />
                <circle cx="7" cy="5.3" r="2.3" fill="#222" />
                <circle cx="6.3" cy="4.6" r="0.8" fill="#eee" />
              </svg>
            </button>
            {/* thumbnail with selection brackets at its corners */}
            <div className="relative ml-px p-0.5">
              <svg viewBox="0 0 36 23" className="absolute inset-0 h-full w-full" fill="none" stroke="#fff" aria-hidden="true">
                <path d="M0.5 5V0.5H11M25 0.5H35.5V5M35.5 18V22.5H25M11 22.5H0.5V18" />
              </svg>
              <div className="h-[19px] w-[32px] border border-[#111] bg-[#f0eff5]" />
            </div>
            <button className="ml-2 text-[10px] text-white">Layer 1</button>
          </div>
        </div>
        <div className="w-[15px] bg-linear-to-r from-[#383838] to-[#454545]" />
      </div>
      <div className="mb-px flex h-[19px] shrink-0 items-center justify-end gap-[13px] border-t border-[#333] pr-[27px]">
        <button aria-label="Link layers">
          <svg viewBox="0 0 14 14" className="size-3.5" fill="none" stroke="#888" strokeWidth="1.5" aria-hidden="true">
            <path d="M6 5H4A2.5 2.5 0 0 0 4 10H6M8 5H10A2.5 2.5 0 0 1 10 10H8" />
          </svg>
        </button>
        <button aria-label="Layer style" className="w-3.5 font-['Liberation_Serif',serif] text-[13px] italic leading-[14px] text-[#bbb]">
          fx
        </button>
        <button aria-label="Add mask">
          <svg viewBox="0 0 14 14" className="size-3.5" aria-hidden="true">
            <path d="M0 2H14V12H0Z" fill="#aaa" />
            <circle cx="7" cy="7" r="3" fill="#444" />
          </svg>
        </button>
        <button aria-label="New adjustment layer">
          <svg viewBox="0 0 14 14" className="size-3.5" aria-hidden="true">
            <circle cx="7" cy="7" r="5" fill="none" stroke="#aaa" strokeWidth="1.5" />
            <path d="M3 11 11 3A6 6 0 0 1 3 11Z" fill="#aaa" />
          </svg>
        </button>
        <button aria-label="New group">
          <svg viewBox="0 0 14 14" className="size-3.5" aria-hidden="true">
            <path d="M1 2H6L7 4H13V12H1Z" fill="#c5c5c5" />
          </svg>
        </button>
        <button aria-label="New layer">
          <svg viewBox="0 0 14 14" className="size-3.5" aria-hidden="true">
            <path d="M2 2H12V12H8V6H2Z" fill="#ccc" />
            <path d="M2 7H7V12Z" fill="#ccc" />
          </svg>
        </button>
        <button aria-label="Delete layer">
          <svg viewBox="0 0 14 14" className="size-3.5" fill="none" stroke="#999" aria-hidden="true">
            <path d="M2 3.5H12M5 3V1.5H9V3M3 5.5H11V12.5H3ZM5.5 6V12M8.5 6V12" />
          </svg>
        </button>
      </div>
    </section>
  );
}

/* ---------- "New" dialog ---------- */

function DialogSelect({
  id,
  label,
  value,
  className,
  height = "h-[22px]",
  disabled,
}: {
  id?: string;
  label?: string;
  value: string;
  className: string;
  height?: string;
  disabled?: boolean;
}) {
  return (
    <div
      className={clsx(
        "relative shrink-0 border",
        height,
        disabled ? "border-[#aaa] bg-[#ececec]" : "border-[#e2e6ee] border-t-[#a6a8ad] bg-white",
        className
      )}
    >
      <select
        id={id}
        aria-label={label}
        disabled={disabled}
        defaultValue={value}
        className="block h-full w-full appearance-none bg-transparent pl-1.5 text-[12px] text-black outline-none"
      >
        <option>{value}</option>
      </select>
      <div className={clsx("pointer-events-none absolute inset-y-0 right-0 flex w-4 items-center justify-center", disabled && "bg-white")}>
        <svg viewBox="0 0 7 4" className="h-1 w-[7px]" aria-hidden="true">
          <path d="M0 0H7L3.5 4Z" fill={disabled ? "#aaa" : "#000"} />
        </svg>
      </div>
    </div>
  );
}

function DialogRow({ id, label, disabled, children }: { id: string; label: string; disabled?: boolean; children: ReactNode }) {
  return (
    <div className="flex h-[30px] items-center">
      <label htmlFor={id} className={clsx("mr-1 w-[142px] shrink-0 text-right", disabled && "text-[#aaa]")}>
        {label}
      </label>
      {children}
    </div>
  );
}

const inputStyle = "h-[21px] border border-[#e2e6ee] border-t-[#a6a8ad] bg-white pl-[5px] text-[12px] text-black outline-none";
const dialogButton = "h-[18px] w-[107px] rounded-[2px] border text-center leading-[17px]";
const plainButton = "border-[#707070] bg-linear-to-b from-[#f2f2f2] from-50% to-[#dadada] to-50% shadow-[inset_0_0_0_1px_#f6f6f6]";

function NewDialog() {
  return (
    <div
      role="dialog"
      aria-label="New"
      className="absolute left-[303px] top-[235px] flex w-[550px] flex-col rounded-[6px] border border-[#4c4f54] bg-[linear-gradient(110deg,#e2f4f4_0%,#f1fefd_22%,#e8f5f4_32%,#f1fefd_42%,#e6f3f2_52%,#f4ffff_66%,#f1fefe_100%)] px-1.5 pb-1.5 text-[12px] leading-[14px] text-black shadow-[0_1px_6px_rgba(40,40,60,0.7),inset_0_0_0_1px_#fff]"
    >
      <div className="flex h-[28px]">
        <h1 className="pl-[1px] pt-1.5 font-['Open_Sans',sans-serif] leading-4">New</h1>
        <button
          aria-label="Close dialog"
          className="ml-auto flex h-[19px] w-[47px] items-center justify-center rounded-b-[4px] border border-t-0 border-[#8f9899] bg-[#f4fdfd]"
        >
          <svg viewBox="0 0 12 10" className="h-[10px] w-3" fill="none" aria-hidden="true">
            <path d="M1.500 0.500 10.500 9.500M10.500 0.500 1.500 9.500" stroke="#4a4a4a" strokeWidth="4" />
            <path d="M2 1 10 9M10 1 2 9" stroke="#f4f4f4" strokeWidth="2" />
          </svg>
        </button>
      </div>
      <div className="flex h-[310px] justify-between border border-[#7d8182] bg-[#ececec] px-[11px]">
        <div className="w-[389px] pt-2.5">
          <div className="flex items-center">
            <label htmlFor="doc-name" className="mr-1 w-[143px] text-right">
              Name:
            </label>
            <input id="doc-name" defaultValue="Untitled-2" className={clsx(inputStyle, "flex-1")} />
          </div>
          <fieldset className="mt-[3px] h-[261px] w-[387px] border border-[#9b9b9b] shadow-[1px_1px_0_#fff]">
            {/* the frame line meets the preset row above its middle */}
            <legend className="ml-[13px] flex h-4 items-start bg-[#ececec] pl-[18px] pr-[7px]">
              <label htmlFor="preset" className="mr-[5px] leading-6">
                Preset:
              </label>
              <DialogSelect id="preset" value="Clipboard" height="h-6" className="w-[250px]" />
            </legend>
            <div className="pt-3">
              <DialogRow id="size" label="Size:" disabled>
                <DialogSelect id="size" value="" className="w-[232px]" disabled />
              </DialogRow>
              <DialogRow id="width" label="Width:">
                <input id="width" defaultValue="1366" className={clsx(inputStyle, "w-[98px]")} />
                <DialogSelect label="Width unit" value="Pixels" className="ml-1 w-[130px]" />
              </DialogRow>
              <DialogRow id="height" label="Height:">
                <input id="height" defaultValue="768" className={clsx(inputStyle, "w-[98px]")} />
                <DialogSelect label="Height unit" value="Pixels" className="ml-1 w-[130px]" />
              </DialogRow>
              <DialogRow id="resolution" label="Resolution:">
                <input id="resolution" defaultValue="72" className={clsx(inputStyle, "w-[98px]")} />
                <DialogSelect label="Resolution unit" value="Pixels/Inch" className="ml-1 w-[130px]" />
              </DialogRow>
              <DialogRow id="mode" label="Color Mode:">
                <DialogSelect id="mode" value="RGB Color" className="w-[95px]" />
                <DialogSelect label="Bit depth" value="8 bit" className="ml-2 w-[129px]" />
              </DialogRow>
              <DialogRow id="contents" label="Background Contents:">
                <DialogSelect id="contents" value="Transparent" className="w-[232px]" />
              </DialogRow>
              <div className="flex items-center pl-5 pr-4 pt-4">
                <button className="flex items-center gap-1.5">
                  <svg viewBox="0 0 16 16" className="size-4" fill="none" aria-hidden="true">
                    <circle cx="8" cy="8" r="7.3" fill="#f8f8f8" stroke="#999" />
                    <path d="M5.5 4.5 8 7 10.5 4.5M5.5 8.5 8 11 10.5 8.5" stroke="#111" strokeWidth="1.5" />
                  </svg>
                  Advanced
                </button>
                <div className="ml-1.5 h-px flex-1 bg-[#a8a8a8] shadow-[0_1px_0_#fff]" />
              </div>
            </div>
          </fieldset>
        </div>
        <div className="flex w-[107px] flex-col pt-[11px]">
          <div className="flex flex-col gap-2.5">
            <button className={clsx(dialogButton, "border-[#2c72a8] bg-linear-to-b from-[#eaf6fd] from-50% to-[#bcdff5] to-50% shadow-[inset_0_0_0_1px_#35c8f5]")}>OK</button>
            <button className={clsx(dialogButton, plainButton)}>Cancel</button>
            <button className={clsx(dialogButton, plainButton)}>Save Preset...</button>
            <button disabled className={clsx(dialogButton, "border-[#adb2b5] bg-[#f4f4f4] text-[#8c8c8c]")}>
              Delete Preset...
            </button>
          </div>
          <div className="mt-[118px] flex flex-col gap-2.5 pr-1.5 text-center">
            <span>Image Size:</span>
            <span>3,00M</span>
          </div>
        </div>
      </div>
    </div>
  );
}

/* ---------- notification area popup ---------- */

const trayApps: { name: string; art: ReactNode }[] = [
  {
    name: "Download manager",
    art: (
      <>
        <path d="M6 4Q0 5 0.500 9T7 13.500" fill="none" stroke="#d22" strokeWidth="1.5" />
        <path d="M7 5Q2 6 2 9T7 12" fill="none" stroke="#fb0" strokeWidth="1.5" />
        <path d="M8 6.5Q4 7 4 9T8 11" fill="none" stroke="#1a3" strokeWidth="1.5" />
        <circle cx="10.5" cy="6" r="5.2" fill="#3c7ae0" />
        <path d="M6 3Q9 0 12 2L10 5 6 6Z" fill="#bcd46a" />
        <path d="M6 9H9V7L16 8.500 9 15.5V12H6Z" fill="#13781c" />
      </>
    ),
  },
  {
    name: "Dolphin",
    art: (
      <>
        <path d="M0 2 4 4 8 3 10 5Q14 5 15 9L13 8.5 11 12 10 9.5 5 9 2 12 3 7Z" fill="#8c95dc" stroke="#5f69b8" strokeWidth="0.7" />
        <path d="M5 6H9M7 4V8" stroke="#fff" strokeWidth="0.7" />
      </>
    ),
  },
  {
    name: "Cleaner",
    art: (
      <>
        <path d="M14.500 4Q11 0 7.5 3.5T8 12Q12 15 15 11.500" fill="none" stroke="#c93b2a" strokeWidth="3.6" />
        <path d="M9.500 0 6.500 10" stroke="#3a86c8" strokeWidth="2.4" />
        <path d="M3 9 8 10 6 15 0 13Z" fill="#e9bb92" />
      </>
    ),
  },
  {
    name: "Green triangle",
    art: (
      <>
        <path d="M8 0.5 16 15.5H0Z" fill="#0b8f1e" />
        <path d="M8 0.5 0 15.5H3L9.5 3Z" fill="#35e03e" />
        <path d="M8 7 11 12H5.5Z" fill="#fff" />
      </>
    ),
  },
  {
    name: "Action center",
    art: (
      <>
        <path d="M0.500 0.5V15.5H2.5V0.5ZM2.5 2Q6 0 8.5 3Q11 4.5 15 3V9H3" fill="#f5f5f5" stroke="#777" />
        <circle cx="11" cy="11" r="4.8" fill="#d92a22" />
        <path d="M9 9 13 13M13 9 9 13" stroke="#fff" strokeWidth="1.6" />
      </>
    ),
  },
  {
    name: "Red dots",
    art: (
      <g fill="#e81c24">
        <circle cx="7" cy="8" r="2.5" />
        <circle cx="12.5" cy="9.5" r="2.3" />
        <circle cx="2.5" cy="10" r="2" />
        <circle cx="6" cy="3.5" r="1.5" />
        <circle cx="11" cy="4" r="1.7" />
        <circle cx="14.5" cy="5.5" r="1.2" />
        <circle cx="4.5" cy="13.5" r="1.3" />
        <circle cx="9.5" cy="13" r="1.4" />
      </g>
    ),
  },
  {
    name: "Creative Cloud",
    art: (
      <g fill="none" stroke="#929292" strokeWidth="1.5">
        <path d="M5 12.5A4 4 0 1 1 7 5.5L10.5 9M11 12.5A4.5 4.5 0 1 0 7.5 7.5M5 12.5H11" />
        <circle cx="5.5" cy="8.8" r="1.6" />
        <circle cx="10.8" cy="8" r="2" />
      </g>
    ),
  },
  {
    name: "Feather",
    art: (
      <>
        <path d="M0.5 15.5Q3 7 15 0.5Q15 7 5 11.5Z" fill="#9b59c8" />
        <path d="M0.5 15.5 12 3.5" stroke="#e8d5f5" strokeWidth="0.8" />
      </>
    ),
  },
  {
    name: "Webcam",
    art: (
      <>
        <circle cx="8" cy="7" r="5.5" fill="#d8d8d8" stroke="#aaa" />
        <circle cx="8" cy="7" r="2.5" fill="#7aa" />
        <circle cx="8" cy="7" r="1.2" fill="#154848" />
        <path d="M3 12.5H13V14.5H3Z" fill="#bbb" />
      </>
    ),
  },
  {
    name: "U torrent",
    art: (
      <>
        <circle cx="8" cy="8" r="7.2" fill="#17251b" stroke="#39d326" strokeWidth="1.5" />
        <path d="M5.5 4.500V8.500Q5.5 11.5 8 11.5T10.5 8.500V4.500" fill="none" stroke="#59df3c" strokeWidth="2" />
        <circle cx="13.2" cy="2.800" r="2.8" fill="#ff9c13" />
      </>
    ),
  },
  {
    name: "Adobe",
    art: (
      <>
        <rect x="1" y="0" width="14" height="14" fill="#c10d12" />
        <path d="M4 10.5V3H6.5ZM12 10.5V3H9.5ZM8 5 10.5 10.5H9L8.3 9H6.8Z" fill="#fff" />
      </>
    ),
  },
  {
    name: "Info",
    art: (
      <>
        <circle cx="8" cy="8" r="7.8" fill="#101820" />
        <circle cx="8" cy="8" r="6.6" fill="none" stroke="#2ba0e8" strokeWidth="1.5" />
        <path d="M10.5 5Q6 4 5.5 8T9 11" fill="none" stroke="#3ab0f5" strokeWidth="1.8" />
        <circle cx="12" cy="11.500" r="4" fill="#0f6fd0" />
        <path d="M12.5 8.500V9.800M12 10.800V14" stroke="#fff" strokeWidth="1.4" />
      </>
    ),
  },
];

function TrayPopup() {
  return (
    <div className="absolute bottom-[48px] right-[102px] w-[161px] rounded-[6px] border border-[#1d252c] bg-[linear-gradient(#8a949c_0%,#a9b1b7_20%,#dfe3e6_27%,#7c8a96_28%,#5b6b78_60%,#2e3d4a_100%)] p-[6px] shadow-[0_0_8px_2px_rgba(0,0,0,0.7),inset_0_0_0_1px_#ccd5dc]">
      <div className="border border-[#222c35] bg-white">
        <div className="grid h-[109px] grid-cols-4 content-start justify-items-center pl-[7px] pr-[10px] pt-[7px]">
          {trayApps.map((app) => (
            <button
              key={app.name}
              aria-label={app.name}
              className={clsx(
                "flex h-8 w-8 items-center justify-center",
                app.name === "Feather" && "bg-[radial-gradient(ellipse_at_bottom,#c9e2fa_0%,transparent_40%),linear-gradient(#fff,#a8a8a8_50%,#f5f5f5)]"
              )}
            >
              <svg viewBox="0 0 16 16" className="size-4" aria-hidden="true">
                {app.art}
              </svg>
            </button>
          ))}
        </div>
        <div className="flex h-[43px] items-center justify-center border-t border-[#ccd9ea] bg-[#f1f5fb] pt-0.5 font-['Open_Sans',sans-serif] text-[12px]">
          <a href="#customize" className="text-[#0066cc]">
            Customize...
          </a>
        </div>
      </div>
    </div>
  );
}

/* ---------- taskbar ---------- */

const taskApps: { name: string; open?: boolean; lit?: boolean; art: ReactNode }[] = [
  {
    name: "Explorer",
    open: true,
    art: (
      <>
        <path d="M1 4H13L15 6H29V28H1Z" fill="#e8c867" />
        <path d="M4 2H10L11 4H20L21 6H29V9H4Z" fill="#f8e9b0" />
        <path d="M4 3H8V5H4Z" fill="#2fa84a" />
        <path d="M12 5H16V7H12Z" fill="#d33" />
        <path d="M21 7H25V9H21Z" fill="#38c" />
        <path d="M2 9H32V27H2Z" fill="#f6df92" />
        <path d="M6 30V20Q6 17 10 17H25Q29 17 29 20V30H24V23H11V30Z" fill="#8fcdee" stroke="#4aa3d4" />
      </>
    ),
  },
  {
    name: "Media Player",
    art: (
      <>
        <path d="M13 4H29V27H13Z" fill="#4d92bd" />
        <path d="M8 4H26V28H8Z" fill="#6eb0d6" />
        <path d="M3 5H23V29H3Z" fill="#a9d4ee" />
        <circle cx="13.500" cy="16" r="9.5" fill="#f07a18" stroke="#f9c08a" />
        <path d="M10.500 10 20 16 10.500 22Z" fill="#fff" />
      </>
    ),
  },
  {
    name: "Internet Explorer",
    art: (
      <>
        <path d="M26.5 21Q23 27 17 26.5Q9 25 9 17T17 7.5T26 17.5H10" fill="none" stroke="#3fb5ee" strokeWidth="5.2" />
        <path d="M5 29Q0 28 5 19Q12 7 22 2Q31 -1 29 8" fill="none" stroke="#f7c72c" strokeWidth="2.6" />
      </>
    ),
  },
  {
    name: "XAMPP",
    art: (
      <>
        <rect x="0.5" y="0.5" width="31" height="31" rx="3" fill="#ef7426" />
        <path d="M0.500 4Q0.500 0.500 4 0.500H28Q31.500 0.500 31.500 4Z" fill="#f5a26c" />
        <path d="M8 9Q12 6 13 10V12H19V10Q20 6 24 9T22 15Q27 17 24 22T19 21V19H13V21Q11 26 8 22T10 15Q5 13 8 9Z" fill="none" stroke="#fff" strokeWidth="3.4" />
      </>
    ),
  },
  {
    name: "Notepad",
    open: true,
    lit: true,
    art: (
      <>
        <path d="M13 4 28 6 31 27 22 30Z" fill="#e5e0d0" stroke="#8d9192" />
        <path d="M12 3 28 5 21 29 2 23Z" fill="#7dc0cd" />
        <path d="M12 3 28 5 25 15 7 13Z" fill="#b3dce2" />
        <path d="M12 3 28 5" stroke="#777" strokeWidth="2" strokeDasharray="1 1" />
      </>
    ),
  },
  {
    name: "Chrome",
    open: true,
    lit: true,
    art: (
      <>
        <circle cx="16" cy="16" r="15" fill="#fcc934" />
        <path d="M16 16 3 8.5A15 15 0 0 0 15.5 31L22.5 19Z" fill="#219a52" />
        <path d="M3 8.5A15 15 0 0 1 29 8.5H16A7.5 7.5 0 0 0 9 17Z" fill="#d93f33" />
        <circle cx="16" cy="16" r="7" fill="#fff" />
        <circle cx="16" cy="16" r="5.6" fill="#4285f4" />
      </>
    ),
  },
  {
    name: "AIMP",
    lit: true,
    art: (
      <>
        <circle cx="16" cy="16" r="14.5" fill="#1c1c1c" />
        <circle cx="16" cy="16" r="11" fill="#ffae25" />
        <path d="M16 8 24 22H8ZM16 14 13 20H19Z" fill="#17150f" fillRule="evenodd" />
      </>
    ),
  },
  {
    name: "Cyberlink",
    lit: true,
    art: (
      <>
        <circle cx="16" cy="16" r="14.500" fill="#0e1a22" stroke="#169fe8" strokeWidth="2.4" />
        <path d="M21 12Q19 9 16 10Q11 11 11 17T15 23Q18 23 20 20" fill="none" stroke="#29a9ee" strokeWidth="4" />
        <rect x="18" y="1" width="13" height="11" rx="4.5" fill="#e08030" />
        <path d="M21 4.5H23M26 4.5H28M21 8Q24.5 11 28 8Z" fill="#fff" stroke="#fff" strokeWidth="1.5" />
      </>
    ),
  },
  {
    name: "Foxit PDF",
    open: true,
    lit: true,
    art: (
      <>
        <path d="M0 0H24V8H32V32H0Z" fill="#f68c1f" />
        <path d="M26 0 32 6H26Z" fill="#f68c1f" />
        <path d="M2 18 16 5 28 15 16 26Z" fill="#f9ac58" />
        <circle cx="15" cy="13.500" r="8.500" fill="#fff" />
        <path d="M22 5Q12 8 12 15Q13 20 18 19Q20 18 20 15H16Q17 10 23 9Z" fill="#f68c1f" />
        <text x="16" y="30" fontSize="7" fontWeight="bold" textAnchor="middle" fill="#fff">
          PDF
        </text>
      </>
    ),
  },
  {
    name: "Photoshop",
    open: true,
    lit: true,
    art: (
      <>
        <rect x="3" y="1" width="26" height="26" fill="#1b1a2c" stroke="#2cc7f5" strokeWidth="2" />
        <text x="16" y="19" fontSize="14" fontWeight="600" textAnchor="middle" fill="#2cb8ee" fontFamily="'Open Sans', sans-serif">
          Ps
        </text>
      </>
    ),
  },
];

function Taskbar() {
  return (
    <footer className="relative flex h-[39px] shrink-0 border-t border-[#10161c] bg-[linear-gradient(rgba(10,20,35,0.65)_0%,rgba(20,50,90,0.28)_25%,rgba(20,50,90,0.04)_100%),linear-gradient(90deg,#0d1823_0,#0d1823_222px,#8db3de_240px,#b6d3f5_330px,#a9cdf5_600px,#b6d6fa_1100px,#a3c5ea_calc(100%_-_80px),#17202a_calc(100%_-_55px),#0d141b_100%)] font-['Open_Sans',sans-serif] text-[11px]">
      <button aria-label="Start" className="ml-2 mr-[14px]">
        <svg viewBox="0 0 38 38" className="size-[38px]" aria-hidden="true">
          <defs>
            <radialGradient id="orb" cx="50%" cy="90%" r="85%">
              <stop stopColor="#3ff0ff" />
              <stop offset="0.35" stopColor="#1880b4" />
              <stop offset="0.75" stopColor="#1e4f76" />
              <stop offset="1" stopColor="#8bb3cc" />
            </radialGradient>
          </defs>
          <circle cx="19" cy="19" r="18" fill="url(#orb)" stroke="#415a6c" />
          <path d="M11 10Q15 8 18 11L16.5 18Q13 16 9 17.5Z" fill="#f1622b" />
          <path d="M20 11Q25 14 30 11L28 18.5Q23 20 18.5 18Z" fill="#8cc63c" />
          <path d="M8.5 19Q13 17.5 16 20L14.5 27Q11 24.5 6.5 26.5Z" fill="#4f9fe0" />
          <path d="M18 20Q23 22 27.5 20L25.5 27.5Q20 30 16 27Z" fill="#fbc926" />
        </svg>
      </button>
      <div className="flex gap-1">
        {taskApps.map((app) => (
          <button
            key={app.name}
            aria-label={app.name}
            className={clsx(
              "flex w-[58px] justify-center rounded-[2px]",
              app.open ? "border border-b-0 border-white/70 pt-px shadow-[0_0_0_1px_rgba(20,30,45,0.5)]" : "pt-0.5",
              app.open && (app.lit ? "bg-white/35" : "bg-linear-to-br from-[#a4a8ad] to-[#3c444d]")
            )}
          >
            <svg viewBox="0 0 32 32" className="size-8" aria-hidden="true">
              {app.art}
            </svg>
          </button>
        ))}
      </div>
      <div className="ml-auto flex items-center text-white">
        <span className="mr-2.5 pb-1">EN</span>
        <button aria-label="Show hidden icons" className="mt-0.5 flex h-5 w-5 items-center justify-center rounded-[2px] border border-white/70 bg-linear-to-b from-[#c8d4e2] to-[#7f92a8]">
          <svg viewBox="0 0 8 4" className="h-1 w-2" aria-hidden="true">
            <path d="M0 4 4 0 8 4Z" fill="#fff" />
          </svg>
        </button>
        <button aria-label="Volume" className="ml-2">
          <svg viewBox="0 0 15 16" className="h-4 w-[15px]" aria-hidden="true">
            <path d="M0.5 5.5H3L7.5 1V15L3 10.5H0.5Z" fill="#fff" stroke="#333" strokeWidth="0.8" />
            <path d="M9.5 5.5Q11 8 9.5 10.5M11.5 3.5Q14 8 11.5 12.5" fill="none" stroke="#fff" strokeWidth="1.3" />
          </svg>
        </button>
        <button aria-label="Network" className="ml-[7px]">
          <svg viewBox="0 0 17 16" className="h-4 w-[17px]" aria-hidden="true">
            <path
              d="M1 11H3V14H1ZM4 9H6V14H4ZM7 7H9V14H7ZM10 5H12V14H10ZM13 2H16V14H13Z"
              fill="#fff"
              stroke="#555"
              strokeWidth="1.6"
              paintOrder="stroke"
            />
          </svg>
        </button>
        <button aria-label="Power" className="ml-[7px]">
          <svg viewBox="0 0 16 16" className="size-4" fill="none" aria-hidden="true">
            <path d="M2.5 2.5H8.5V14.5H2.5ZM4 1H7" stroke="#fff" strokeWidth="1.8" />
            <path d="M9 1V5M13 1V5" stroke="#fff" strokeWidth="1.5" />
            <path d="M7 5H15V8Q15 10 11 10.5T7 8Z" fill="#fff" stroke="#444" strokeWidth="0.7" />
            <path d="M11 10V15" stroke="#fff" strokeWidth="1.8" />
          </svg>
        </button>
        <div className="mx-3 flex w-[66px] flex-col items-center whitespace-nowrap pt-px leading-[17px]">
          <time>19:32</time>
          <span>25/03/2017</span>
        </div>
        <button aria-label="Show desktop" className="h-full w-[13px] border border-[#4a5661] bg-linear-to-br from-[#4a555f] to-[#0c1117]" />
      </div>
    </footer>
  );
}

export default function App() {
  return (
    <div className="relative flex h-screen min-w-0 flex-col overflow-hidden bg-[#2b2b2b] font-['DejaVu_Sans_Condensed','DejaVu_Sans',sans-serif]">
      <MenuBar />
      <OptionsBar />
      <div className="flex min-h-0 flex-1">
        <Toolbox />
        <DocumentArea />
        <div className="ml-0.5 flex shrink-0">
          <IconDock />
          <div className="ml-0.5 flex w-[223px] flex-col border-l border-[#2b2b2b]">
            <div className="flex h-[12px] shrink-0 items-center justify-end bg-[#3b3b3b] pr-1">
              <Chevrons />
            </div>
            <ColorPanel />
            <AdjustmentsPanel />
            <LayersPanel />
          </div>
        </div>
      </div>
      <Taskbar />
      <NewDialog />
      <TrayPopup />
    </div>
  );
}
